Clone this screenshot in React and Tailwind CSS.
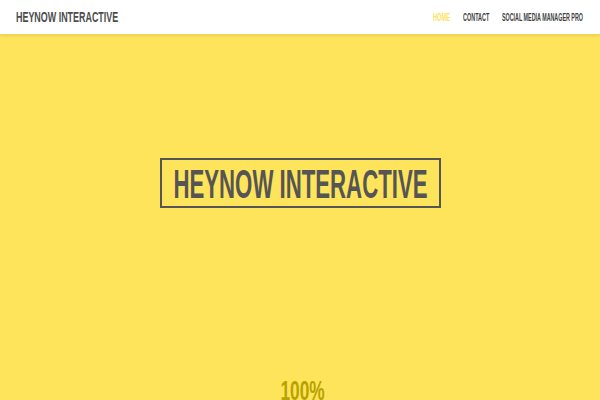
import React from 'react';

const font = { fontFamily: '"Liberation Sans", Arial, sans-serif' };

const App = () => {
    return (
        <div className="w-[600px] h-[400px] overflow-hidden bg-[#fee45a] font-bold" style={font}>
            {/* Top bar */}
            <header className="h-[34px] bg-white shadow-[0_1px_4px_rgba(0,0,0,0.12)] flex items-center justify-between pl-4 pr-[17px] relative z-10">
                <span className="text-[15.5px] leading-none text-[#4d4d4d] scale-x-[0.576] origin-left inline-block whitespace-nowrap">
                    HEYNOW INTERACTIVE
                </span>
                <nav className="flex items-center text-[10.5px] leading-none">
                    <span className="text-[#fee45a] w-[30px] scale-x-[0.54] origin-left inline-block whitespace-nowrap">HOME</span>
                    <span className="text-[#3f3f3f] w-[39px] scale-x-[0.52] origin-left inline-block whitespace-nowrap">CONTACT</span>
                    <span className="text-[#3f3f3f] w-[81px] scale-x-[0.51] origin-left inline-block whitespace-nowrap">SOCIAL MEDIA MANAGER PRO</span>
                </nav>
            </header>

            {/* Hero */}
            <div className="flex flex-col items-center pt-[124px]">
                <div className="w-[281px] h-[50px] border-2 border-[#555555] flex items-center justify-center">
                    <span className="text-[41.5px] leading-none text-[#555555] scale-x-[0.535] inline-block whitespace-nowrap mt-[1px]">
                        HEYNOW INTERACTIVE
                    </span>
                </div>
                <div className="mt-[170px] ml-[6px] text-[27px] leading-none text-[#b7a300] scale-x-[0.64] inline-block">
                    100%
                </div>
            </div>
        </div>
    );
};

export default App;
